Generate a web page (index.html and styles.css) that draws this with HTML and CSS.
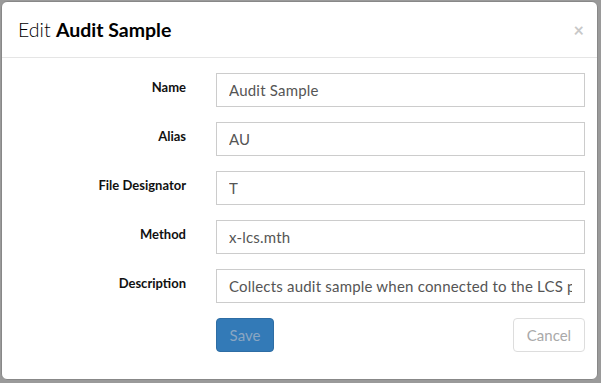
FILE: index.html
```html
<!DOCTYPE html>
<html lang="en">
<head>
  <meta charset="UTF-8">
  <title>Edit Audit Sample</title>
  <link rel="stylesheet" href="styles.css">
</head>
<body>
  <div class="modal">
    <div class="modal-header">
      <h4 class="modal-title">Edit <strong>Audit Sample</strong></h4>
      <span class="close">&times;</span>
    </div>
    <form class="modal-body">
      <div class="form-row">
        <label>Name</label>
        <input type="text" value="Audit Sample">
      </div>
      <div class="form-row">
        <label>Alias</label>
        <input type="text" value="AU">
      </div>
      <div class="form-row">
        <label>File Designator</label>
        <input type="text" value="T">
      </div>
      <div class="form-row">
        <label>Method</label>
        <input type="text" value="x-lcs.mth">
      </div>
      <div class="form-row">
        <label>Description</label>
        <input type="text" value="Collects audit sample when connected to the LCS port">
      </div>
      <div class="form-row">
        <span></span>
        <div class="actions">
          <button type="button" class="btn btn-primary">Save</button>
          <button type="button" class="btn btn-default">Cancel</button>
        </div>
      </div>
    </form>
  </div>
</body>
</html>
```

FILE: styles.css
```css
body {
  margin: 0;
  padding: 1px 3px 1px 1px;
  background-color: #9a9a9a;
  font-family: Lato, 'Open Sans', sans-serif;
  font-size: 14px;
  color: #333;
}
.modal {
  background-color: #fff;
  border: 1px solid #888;
  border-radius: 6px;
  height: 379px;
  box-sizing: border-box;
}
.modal-header {
  display: flex;
  justify-content: space-between;
  align-items: center;
  padding: 15px 13px 15px 16px;
  border-bottom: 1px solid #e5e5e5;
}
.modal-title {
  margin: 0;
  font-size: 19.5px;
  font-weight: 300;
  line-height: 25px;
  color: #000;
}
.modal-title strong {
  font-weight: 700;
}
.close {
  font-size: 18px;
  font-weight: bold;
  color: #c8c8c8;
  line-height: 1;
}
.modal-body {
  padding: 15px 12px 15px 0;
}
.form-row {
  display: grid;
  grid-template-columns: 184px 1fr;
  column-gap: 30px;
  align-items: center;
  margin-bottom: 15px;
}
.form-row label {
  text-align: right;
  font-size: 13px;
  font-weight: 700;
  color: #111;
  margin-top: -7px;
}
.form-row input {
  height: 34px;
  box-sizing: border-box;
  padding: 6px 12px;
  border: 1px solid #ccc;
  font-family: inherit;
  font-size: 15px;
  letter-spacing: 0.2px;
  color: #555;
  width: 100%;
}
.actions {
  display: flex;
  justify-content: space-between;
}
.btn {
  height: 34px;
  padding: 6px 12px;
  border-radius: 4px;
  font-family: inherit;
  font-size: 15px;
  cursor: pointer;
}
.btn-primary {
  width: 58px;
  background-color: #337ab7;
  border: 1px solid #2e6da4;
  color: #8aa6c2;
}
.btn-default {
  width: 72px;
  background-color: #fff;
  border: 1px solid #ddd;
  color: #a9a9a9;
}
```
